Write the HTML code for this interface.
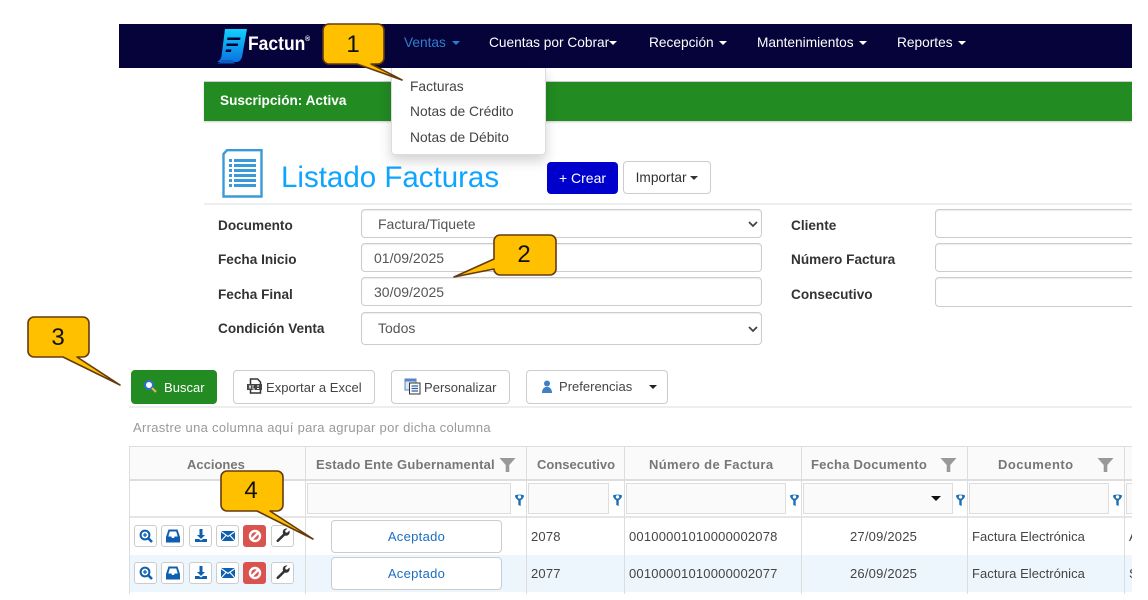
<!DOCTYPE html>
<html lang="es"><head><meta charset="utf-8"><title>Listado Facturas</title>
<style>
html,body{margin:0;padding:0;background:#fff;width:1148px;height:600px;overflow:hidden}
body{font-family:"Liberation Sans",sans-serif;position:relative}
#clip{position:absolute;left:0;top:0;width:1132px;height:594px;overflow:hidden}
.a{position:absolute;white-space:nowrap}
.nav{color:#fff;font-size:13.7px;top:35px;line-height:16px}
.car{display:inline-block;border:4px solid transparent;border-top-color:currentColor;border-bottom:0;vertical-align:middle;margin-left:2px}
.item{color:#444;font-size:13.8px;left:410px;line-height:16px}
.lab{font-weight:bold;font-size:13.6px;color:#333;line-height:16px}
.inp{position:absolute;background:#fff;border:1px solid #ccc;border-radius:4px;box-sizing:border-box;color:#555;font-size:14px;padding-left:12px;box-shadow:inset 0 1px 1px rgba(0,0,0,.075)}
.btn{position:absolute;box-sizing:border-box;border:1px solid #ccc;border-radius:4px;background:#fff;color:#444;font-size:13px;height:34px;top:370px;line-height:32px}
.t{font-size:13px;letter-spacing:.02px;margin-top:1px}
.th{position:absolute;top:448px;height:33px;line-height:34px;font-size:13px;font-weight:bold;color:#777;text-align:center;letter-spacing:.2px;white-space:nowrap;box-sizing:border-box}
.vl{position:absolute;width:1px;background:#ddd}
.fi{position:absolute;top:483px;height:31px;box-sizing:border-box;background:#fafafa;border:1px solid #ddd}
.td{position:absolute;font-size:13px;color:#444;white-space:nowrap;line-height:16px;letter-spacing:.2px}
.ab{position:absolute;width:23px;height:22px;box-sizing:border-box;border:1px solid #ccc;border-radius:3px;background:#fff}
.ab svg{position:absolute;left:3px;top:2px;width:16px;height:16px}
.ab.r{background:#d9534f;border-color:#d9534f}
.ac{position:absolute;left:331px;width:171px;box-sizing:border-box;border:1px solid #ccc;border-radius:4px;background:#fff;color:#1a6fc0;font-size:13px;text-align:center;letter-spacing:.3px}
.fk{position:absolute;top:494px;width:9px;height:13px}
.arrow{position:absolute;right:2px}
</style></head><body>
<svg width="0" height="0" style="position:absolute">
<symbol id="i1" viewBox="0 0 16 16"><circle cx="7" cy="7" r="4.4" fill="none" stroke="#0f5fb0" stroke-width="2"/><path d="M10 10l4 4" stroke="#0f5fb0" stroke-width="2.6"/><path d="M5 7h4M7 5v4" stroke="#0f5fb0" stroke-width="1.3"/></symbol>
<symbol id="i2" viewBox="0 0 16 16"><path fill-rule="evenodd" fill="#0f5fb0" d="M3.500 1.500h9L15 9v5.500H1V9zM4.800 3.500L3.300 8.500h3l.7 1.500h2l.7-1.500h3l-1.500-5z"/></symbol>
<symbol id="i3" viewBox="0 0 16 16"><path fill="#0f5fb0" d="M6.500 1h3v6H12L8 11 4 7h2.500zM2 11h4l2 1.500 2-1.500h4v3H2z"/></symbol>
<symbol id="i4" viewBox="0 0 16 16"><rect x="1" y="3" width="14" height="10" fill="#0f5fb0"/><path d="M1 3.500l7 5 7-5M1 13l5-5.500M15 13l-5-5.500" stroke="#fff" stroke-width="1.100" fill="none"/></symbol>
<symbol id="i5" viewBox="0 0 16 16"><circle cx="8" cy="8" r="5" fill="none" stroke="#fff" stroke-width="2.400"/><path d="M4.500 11.500l7-7" stroke="#fff" stroke-width="2.400"/></symbol>
<symbol id="i6" viewBox="0 0 16 16"><path fill="#333" d="M14.500 2.500l-2.500 2.300-1.500-.6-.4-1.500 2.400-2.200C10 .2 7.600 1.500 7.800 4.400c0 .6.100 1 .3 1.400L1.800 12c-1 1.100.6 2.800 1.800 1.800l6.300-6.200c3 .9 5.500-1.800 4.600-5.100z"/></symbol>
<symbol id="fk" viewBox="0 0 9 13"><path fill="#1c6fb5" d="M0 1.500C1 .3 8 .3 9 1.500 9 4 6.700 5.500 5.700 6.500V12L3.300 11V6.500C2.300 5.500 0 4 0 1.500z"/><circle cx="4.500" cy="2.900" r="1.700" fill="#fff"/></symbol>
<symbol id="fg" viewBox="0 0 16 16"><path fill="#999" d="M0 1h16L9.800 8v7H6.200V8z"/></symbol>
<linearGradient id="lg" x1="0" y1="0" x2="0" y2="1"><stop offset="0" stop-color="#12d0ff"/><stop offset="1" stop-color="#0a72e0"/></linearGradient>
</svg>
<div id="clip">
<div class="a" style="left:119px;top:24px;width:1013px;height:44px;background:#06023a"></div>
<svg class="a" style="left:216px;top:28px" width="32" height="36" viewBox="0 0 32 36"><path fill="url(#lg)" d="M9 1H31L26 29Q25 33 21 34H1Q5 32 5.500 28z"/><path fill="#0b5cc0" d="M0 35.500c2 0 4.500-1 5-3.500H17c0 2 1 3.500 3 3.500z"/><path fill="#06023a" d="M11.500 9.500h13l-.4 2.500h-13zM10.700 15.500h11.500l-.4 2.500H10.300zM9.900 21.500h5.500l-.4 2.500H9.500z"/></svg>
<div class="a" style="left:248px;top:34px;color:#fff;font-weight:bold;font-size:19px;line-height:22px;transform:scaleX(.92);transform-origin:left">Factun</div>
<div class="a" style="left:305px;top:36px;color:#fff;font-weight:bold;font-size:7px;line-height:8px">®</div>
<div class="a nav" style="left:404px;color:#2f7fd0">Ventas <span class="car"></span></div>
<div class="a nav" style="left:489px">Cuentas por Cobrar<span class="car" style="margin-left:0"></span></div>
<div class="a nav" style="left:649px">Recepción <span class="car"></span></div>
<div class="a nav" style="left:757px">Mantenimientos <span class="car"></span></div>
<div class="a nav" style="left:897px">Reportes <span class="car"></span></div>

<div class="a" style="left:204px;top:81px;width:928px;height:40px;background:#228b22;box-shadow:0 1px 2px rgba(0,0,0,.2);border-top:1px solid #ccc;box-sizing:border-box"></div>
<div class="a" style="left:220px;top:93px;color:#fff;font-weight:bold;font-size:13.6px;line-height:16px">Suscripción: Activa</div>

<svg class="a" style="left:222px;top:149px" width="41" height="50" viewBox="0 0 41 50"><path d="M5 1.200H39.500V47.500H1.500V5z" fill="#fff" stroke="#3a9ad9" stroke-width="2.400"/><g fill="#3a9ad9"><rect x="7" y="10" width="3" height="3"/><rect x="7" y="15" width="3" height="3"/><rect x="7" y="20" width="3" height="3"/><rect x="7" y="25" width="3" height="3"/><rect x="7" y="30" width="3" height="3"/><rect x="7" y="35" width="3" height="3"/><rect x="12" y="10" width="22" height="3"/><rect x="12" y="15" width="22" height="3"/><rect x="12" y="20" width="22" height="3"/><rect x="12" y="25" width="22" height="3"/><rect x="12" y="30" width="22" height="3"/><rect x="12" y="35" width="22" height="3"/></g></svg>
<div class="a" style="left:281px;top:160px;color:#0ea5ff;font-size:29.5px;line-height:36px">Listado Facturas</div>
<div class="a" style="left:547px;top:162px;width:71px;height:32px;background:#0000cd;border-radius:4px;color:#fff;font-size:14px;line-height:32px;text-align:center">+ Crear</div>
<div class="a" style="left:623px;top:161px;width:88px;height:33px;box-sizing:border-box;background:#fff;border:1px solid #ccc;border-radius:4px;color:#333;font-size:13.7px;line-height:31px;text-align:center">Importar <span class="car" style="margin-left:0"></span></div>
<div class="a" style="left:204px;top:203px;width:928px;height:2px;background:#eee"></div>

<div class="a lab" style="left:218px;top:218px">Documento</div>
<div class="a lab" style="left:218px;top:252px">Fecha Inicio</div>
<div class="a lab" style="left:218px;top:287px">Fecha Final</div>
<div class="a lab" style="left:218px;top:321px">Condición Venta</div>
<div class="inp" style="left:361px;top:209px;width:401px;height:29px;line-height:29px;padding-left:16px">Factura/Tiquete<svg class="arrow" style="top:10px" width="12" height="8"><path d="M2 2L6 6l4-4" fill="none" stroke="#444" stroke-width="1.800"/></svg></div>
<div class="inp" style="left:361px;top:243px;width:401px;height:29px;line-height:29px">01/09/2025</div>
<div class="inp" style="left:361px;top:277px;width:401px;height:29px;line-height:29px">30/09/2025</div>
<div class="inp" style="left:361px;top:312px;width:401px;height:33px;line-height:31px;padding-left:16px">Todos<svg class="arrow" style="top:12px" width="12" height="8"><path d="M2 2L6 6l4-4" fill="none" stroke="#444" stroke-width="1.800"/></svg></div>
<div class="a lab" style="left:791px;top:218px">Cliente</div>
<div class="a lab" style="left:791px;top:252px">Número Factura</div>
<div class="a lab" style="left:791px;top:287px">Consecutivo</div>
<div class="inp" style="left:935px;top:209px;width:300px;height:29px"></div>
<div class="inp" style="left:935px;top:243px;width:300px;height:29px"></div>
<div class="inp" style="left:935px;top:277px;width:300px;height:30px"></div>

<div class="btn" style="left:131px;width:86px;background:#228b22;border-color:#228b22;color:#fff"><svg class="a" style="left:11px;top:8px" width="15" height="15" viewBox="0 0 15 15"><circle cx="6" cy="6" r="4" fill="#fff" stroke="#2a6fd6" stroke-width="2"/><path d="M9 9l4 4" stroke="#e8b060" stroke-width="2.200"/></svg><span class="a t" style="left:32px">Buscar</span></div>
<div class="btn" style="left:233px;width:142px"><svg class="a" style="left:12px;top:7px" width="17" height="17" viewBox="0 0 17 17"><path d="M4.500 1h7l3 3v11h-10z" fill="#fff" stroke="#333" stroke-width="1.500"/><rect x="1" y="6" width="15" height="6" fill="#444"/><path d="M3 7.500l2 3M5 7.500l-2 3M7 7v4h2M11 8h2M11 10.500h2" stroke="#fff" stroke-width=".9"/></svg><span class="a t" style="left:32px">Exportar a Excel</span></div>
<div class="btn" style="left:391px;width:119px"><svg class="a" style="left:12px;top:7px" width="17" height="17" viewBox="0 0 17 17"><rect x="1" y="1" width="11" height="11" fill="#dbe6f5" stroke="#5b86c5"/><rect x="1" y="1" width="11" height="2.500" fill="#5b86c5"/><rect x="5.500" y="5" width="10.500" height="11" fill="#fff" stroke="#333"/><path d="M7.500 8h6.500M7.500 10.500h6.500M7.500 13h6.500" stroke="#2a5da8" stroke-width="1.200"/></svg><span class="a t" style="left:32px">Personalizar</span></div>
<div class="btn" style="left:526px;width:142px"><svg class="a" style="left:13px;top:8px" width="14" height="15" viewBox="0 0 14 15"><circle cx="7" cy="4.500" r="3" fill="#3f7fc4"/><path d="M2 14c0-4 2-5.500 3.500-6h3C10 8.500 12 10 12 14z" fill="#3f7fc4"/></svg><span class="a t" style="left:32px;top:-1px">Preferencias</span><span class="car a" style="left:122px;top:14px;margin:0;color:#222"></span></div>
<div class="a" style="left:129px;top:406px;width:1003px;height:2px;background:#eee"></div>
<div class="a" style="left:133px;top:420px;color:#999;font-size:13px;line-height:16px;letter-spacing:.3px">Arrastre una columna aquí para agrupar por dicha columna</div>

<div class="a" style="left:129px;top:446px;width:1003px;height:35px;background:#fafafa;border-top:1px solid #ddd;border-bottom:2px solid #ddd;box-sizing:border-box"></div>
<div class="a" style="left:129px;top:516px;width:1003px;height:2px;background:#e6e6e6"></div>
<div class="a" style="left:129px;top:555px;width:1003px;height:37px;background:#eef6fd"></div>
<div class="vl" style="left:129px;top:446px;height:148px"></div>
<div class="vl" style="left:305px;top:446px;height:148px"></div>
<div class="vl" style="left:526px;top:446px;height:148px"></div>
<div class="vl" style="left:624px;top:446px;height:148px"></div>
<div class="vl" style="left:801px;top:446px;height:148px"></div>
<div class="vl" style="left:967px;top:446px;height:148px"></div>
<div class="vl" style="left:1124px;top:446px;height:148px"></div>

<div class="a th" style="left:187px;text-align:left;letter-spacing:0">Acciones</div>
<div class="a th" style="left:316px;text-align:left;letter-spacing:.19px">Estado Ente Gubernamental</div>
<svg class="a" style="left:499px;top:457px" width="17" height="16"><use href="#fg"/></svg>
<div class="a th" style="left:537px;text-align:left;letter-spacing:0">Consecutivo</div>
<div class="a th" style="left:649px;text-align:left;letter-spacing:.35px">Número de Factura</div>
<div class="a th" style="left:811px;text-align:left;letter-spacing:.22px">Fecha Documento</div>
<svg class="a" style="left:940px;top:457px" width="17" height="16"><use href="#fg"/></svg>
<div class="a th" style="left:998px;text-align:left;letter-spacing:.45px">Documento</div>
<svg class="a" style="left:1097px;top:457px" width="17" height="16"><use href="#fg"/></svg>

<div class="fi" style="left:307px;width:204px"></div><svg class="fk" style="left:515px"><use href="#fk"/></svg>
<div class="fi" style="left:528px;width:81px"></div><svg class="fk" style="left:613px"><use href="#fk"/></svg>
<div class="fi" style="left:626px;width:160px"></div><svg class="fk" style="left:790px"><use href="#fk"/></svg>
<div class="fi" style="left:803px;width:150px"></div><span class="a" style="left:931px;top:496px;border:5px solid transparent;border-top-color:#111;border-bottom:0"></span><svg class="fk" style="left:956px"><use href="#fk"/></svg>
<div class="fi" style="left:969px;width:140px"></div><svg class="fk" style="left:1113px"><use href="#fk"/></svg>
<div class="fi" style="left:1126px;width:40px"></div>

<div class="ab" style="left:134px;top:525px"><svg><use href="#i1"/></svg></div>
<div class="ab" style="left:161px;top:525px"><svg><use href="#i2"/></svg></div>
<div class="ab" style="left:189px;top:525px"><svg><use href="#i3"/></svg></div>
<div class="ab" style="left:216px;top:525px"><svg><use href="#i4"/></svg></div>
<div class="ab r" style="left:243px;top:525px"><svg><use href="#i5"/></svg></div>
<div class="ab" style="left:271px;top:525px"><svg><use href="#i6"/></svg></div>
<div class="ac" style="top:520px;height:33px;line-height:32px">Aceptado</div>
<div class="td" style="left:531px;top:529px">2078</div>
<div class="td" style="left:629px;top:529px">00100001010000002078</div>
<div class="td" style="left:850px;top:529px">27/09/2025</div>
<div class="td" style="left:972px;top:529px;letter-spacing:.05px">Factura Electrónica</div>
<div class="td" style="left:1129px;top:529px">A</div>

<div class="ab" style="left:134px;top:562px"><svg><use href="#i1"/></svg></div>
<div class="ab" style="left:161px;top:562px"><svg><use href="#i2"/></svg></div>
<div class="ab" style="left:189px;top:562px"><svg><use href="#i3"/></svg></div>
<div class="ab" style="left:216px;top:562px"><svg><use href="#i4"/></svg></div>
<div class="ab r" style="left:243px;top:562px"><svg><use href="#i5"/></svg></div>
<div class="ab" style="left:271px;top:562px"><svg><use href="#i6"/></svg></div>
<div class="ac" style="top:557px;height:33px;line-height:32px">Aceptado</div>
<div class="td" style="left:531px;top:566px">2077</div>
<div class="td" style="left:629px;top:566px">00100001010000002077</div>
<div class="td" style="left:850px;top:566px">26/09/2025</div>
<div class="td" style="left:972px;top:566px;letter-spacing:.05px">Factura Electrónica</div>
<div class="td" style="left:1129px;top:566px">S</div>

<div class="a" style="left:391px;top:68px;width:155px;height:87px;background:#fff;border:1px solid #ddd;border-top:0;border-radius:0 0 4px 4px;box-sizing:border-box;box-shadow:0 6px 12px rgba(0,0,0,.175)"></div>
<div class="a item" style="top:79px">Facturas</div>
<div class="a item" style="top:104px">Notas de Crédito</div>
<div class="a item" style="top:130px">Notas de Débito</div>
</div>

<svg class="a" style="left:0;top:0;pointer-events:none" width="1148" height="600" viewBox="0 0 1148 600">
<g fill="#ffc000" stroke="#663a0f" stroke-width="1.600" stroke-linejoin="round">
<path d="M329 24H378a6 6 0 0 1 6 6V58a6 6 0 0 1-6 6H371L402 80 357 64H329a6 6 0 0 1-6-6V30a6 6 0 0 1 6-6z"/>
<path d="M500 235H550a6 6 0 0 1 6 6V269a6 6 0 0 1-6 6H500a6 6 0 0 1-6-6V269L454 277 494 259V241a6 6 0 0 1 6-6z"/>
<path d="M34 317H83a6 6 0 0 1 6 6V351a6 6 0 0 1-6 6H77L120 385 63 357H34a6 6 0 0 1-6-6V323a6 6 0 0 1 6-6z"/>
<path d="M227 471H277a6 6 0 0 1 6 6V505a6 6 0 0 1-6 6H270L313 539 257 511H227a6 6 0 0 1-6-6V477a6 6 0 0 1 6-6z"/>
</g>
<g font-family="Liberation Sans, sans-serif" font-size="24" fill="#111" text-anchor="middle">
<text x="353" y="52">1</text>
<text x="524" y="262">2</text>
<text x="58" y="345">3</text>
<text x="251" y="498">4</text>
</g>
</svg>
</body></html>
